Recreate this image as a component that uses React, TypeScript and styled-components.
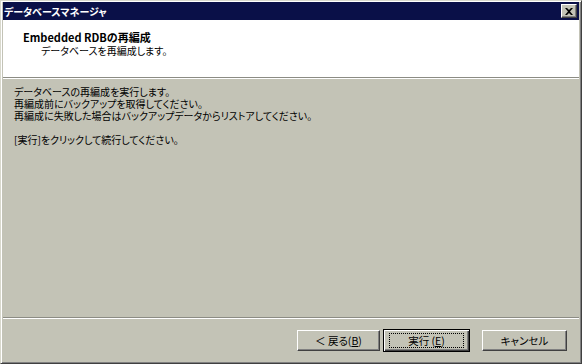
import React from "react";
import styled, { createGlobalStyle } from "styled-components";

const GlobalStyle = createGlobalStyle`
  html, body {
    margin: 0;
    padding: 0;
    background: #c3c3b6;
  }
`;

const font = `"Noto Sans CJK JP", "DejaVu Sans", sans-serif`;

const Window = styled.div`
  width: 582px;
  height: 364px;
  box-sizing: border-box;
  display: flex;
  flex-direction: column;
  background: #c3c3b6;
  border: 1px solid;
  border-color: #d8d8cc #404040 #404040 #d8d8cc;
  box-shadow: inset 1px 1px 0 #ffffff, inset -1px -1px 0 #808080;
  padding: 1px 2px 2px 2px;
  font-family: ${font};
  font-feature-settings: "palt";
  font-size: 10px;
  color: #000;
`;

const TitleBar = styled.div`
  height: 18px;
  flex: none;
  display: flex;
  align-items: center;
  justify-content: space-between;
  background: #0a1048;
  color: #fff;
  font-weight: bold;
  font-size: 10px;
  padding: 0 2px 0 1px;
`;

const CloseButton = styled.div`
  width: 16px;
  height: 14px;
  box-sizing: border-box;
  display: flex;
  align-items: center;
  justify-content: center;
  background: #c3c3b6;
  border: 1px solid;
  border-color: #ffffff #404040 #404040 #ffffff;
  box-shadow: inset -1px -1px 0 #808080;
`;

const Header = styled.div`
  height: 57px;
  flex: none;
  background: #fff;
  padding: 11px 0 0 20px;
  box-sizing: border-box;
  line-height: 13px;
`;

const HeaderTitle = styled.div`
  font-weight: bold;
  font-size: 11px;
`;

const HeaderSub = styled.div`
  margin-left: 18px;
`;

const Separator = styled.div`
  height: 0;
  flex: none;
  border-top: 1px solid #8c8c84;
  border-bottom: 1px solid #ffffff;
`;

const Body = styled.div`
  flex: 1;
  padding: 7px 0 0 11px;
  line-height: 12px;
`;

const Blank = styled.div`
  height: 12px;
`;

const ButtonRow = styled.div`
  height: 42px;
  flex: none;
  display: flex;
  align-items: center;
  justify-content: flex-end;
  padding-right: 12px;
  box-sizing: border-box;
`;

const Button = styled.button<{ $primary?: boolean; $gap?: number; $w: number }>`
  width: ${(p) => p.$w}px;
  height: ${(p) => (p.$primary ? 23 : 21)}px;
  margin-left: ${(p) => p.$gap ?? 0}px;
  box-sizing: border-box;
  background: #c3c3b6;
  font-family: ${font};
  font-feature-settings: "palt";
  font-size: 10.5px;
  color: #000;
  padding: 0;
  display: flex;
  align-items: center;
  justify-content: center;
  border: 1px solid;
  border-color: ${(p) => (p.$primary ? "#000" : "#ffffff #404040 #404040 #ffffff")};
  box-shadow: ${(p) =>
    p.$primary
      ? "inset 1px 1px 0 #ffffff, inset -1px -1px 0 #404040, inset -2px -2px 0 #808080"
      : "inset -1px -1px 0 #808080"};
`;

const Focus = styled.span`
  display: flex;
  align-items: center;
  justify-content: center;
  width: 75px;
  height: 15px;
  box-sizing: border-box;
  border: 1px dotted #000;
`;

export default function App() {
  return (
    <>
      <GlobalStyle />
      <Window>
        <TitleBar>
          <span>データベースマネージャ</span>
          <CloseButton>
            <svg width="8" height="7" viewBox="0 0 8 7">
              <path d="M0 0h2l2 2 2-2h2L5 3.5 8 7H6L4 5 2 7H0l3-3.5z" fill="#000" />
            </svg>
          </CloseButton>
        </TitleBar>
        <Header>
          <HeaderTitle>Embedded RDBの再編成</HeaderTitle>
          <HeaderSub>データベースを再編成します。</HeaderSub>
        </Header>
        <Separator />
        <Body>
          <div>データベースの再編成を実行します。</div>
          <div>再編成前にバックアップを取得してください。</div>
          <div>再編成に失敗した場合はバックアップデータからリストアしてください。</div>
          <Blank />
          <div>[実行]をクリックして続行してください。</div>
        </Body>
        <Separator />
        <ButtonRow>
          <Button $w={83}>＜ 戻る(<u>B</u>)</Button>
          <Button $w={87} $primary $gap={3}>
            <Focus>
              実行 (<u>E</u>)
            </Focus>
          </Button>
          <Button $w={85} $gap={12}>キャンセル</Button>
        </ButtonRow>
      </Window>
    </>
  );
}
